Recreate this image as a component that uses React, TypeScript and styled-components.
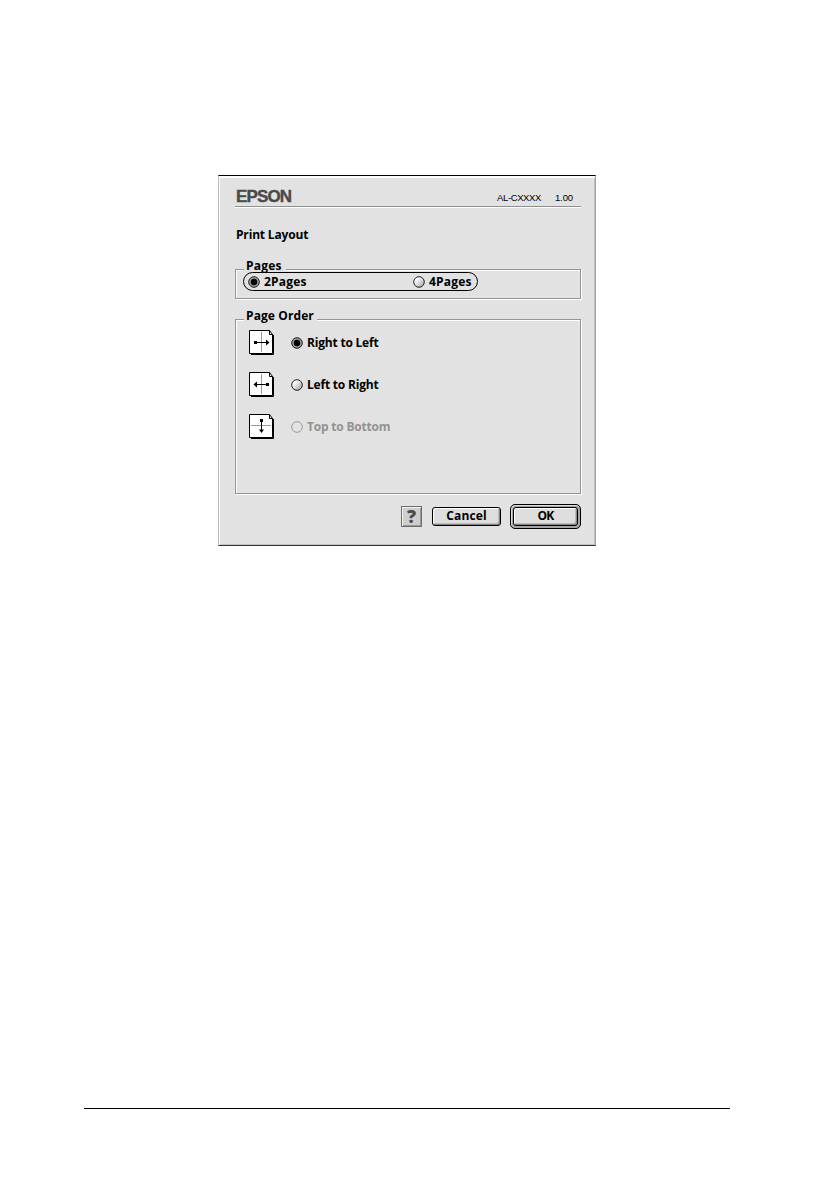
import React from 'react';
import styled, { createGlobalStyle, css } from 'styled-components';

const GlobalStyle = createGlobalStyle`
  * { box-sizing: border-box; }
  body { margin: 0; background: #fff; }
`;

const Page = styled.main`
  width: 840px;
  height: 1190px;
  padding: 175px 110px 81px 84px;
  display: flex;
  flex-direction: column;
  justify-content: space-between;
  background: #fff;
  color: #000;
  font: 700 12px/16px 'Open Sans', 'Noto Sans', sans-serif;
`;

const Dialog = styled.section`
  width: 378px;
  height: 371px;
  margin-left: 134px;
  padding: 12px 13px 0 15px;
  border: 1px solid #a0a0a0;
  border-left-color: #bdbdbd;
  border-top-color: #000;
  border-bottom-color: #333;
  background: #e2e2e2;
  box-shadow: inset 1px 2px 0 #fbfbfb, inset -1px -1px 0 #c2c2c2;
`;

const Header = styled.header`
  width: 346px;
  height: 20px;
  margin-left: 1px;
  display: flex;
  justify-content: space-between;
  border-bottom: 1px solid #fff;
  box-shadow: inset 0 -1px 0 #8e8e8e;
`;

const Brand = styled.div`
  padding-left: 1px;
  font: 700 17px/18px 'Liberation Sans', Arial, sans-serif;
  letter-spacing: -0.85px;
  color: #4a4a4a;
  -webkit-text-stroke: 0.4px #4a4a4a;
`;

const Version = styled.div`
  display: flex;
  gap: 14px;
  padding: 3px 8px 0 0;
  font: 400 9.5px/14px 'Liberation Sans', Arial, sans-serif;
`;

const Label = styled.span<{ $spacing?: number; $muted?: boolean }>`
  letter-spacing: ${(p) => p.$spacing ?? 0}px;
  white-space: nowrap;
  color: ${(p) => (p.$muted ? '#929292' : '#000')};
`;

const Title = styled.h1`
  margin: 19px 0 0 2px;
  height: 17px;
  font: inherit;
`;

const Group = styled.fieldset<{ $height: number; $top: number }>`
  width: 346px;
  height: ${(p) => p.$height}px;
  margin: ${(p) => p.$top}px 0 0 1px;
  padding: 0;
  border: 1px solid #949494;
  box-shadow: 1px 1px 0 #fff, inset 1px 1px 0 #fff;
  min-width: 0;
`;

const Legend = styled.div<{ $width: number }>`
  width: ${(p) => p.$width}px;
  height: 16px;
  margin: -12px 0 0 8px;
  padding-left: 2px;
  background: #e2e2e2;
`;

const Capsule = styled.div`
  width: 235px;
  height: 19px;
  margin: -2px 0 0 7px;
  padding: 0 4px;
  display: flex;
  align-items: center;
  border: 1px solid #000;
  border-radius: 10px;
`;

const Option = styled.label<{ $width?: number }>`
  display: flex;
  align-items: center;
  gap: 4px;
  width: ${(p) => (p.$width ? `${p.$width}px` : 'auto')};
`;

const Orders = styled.div`
  padding: 6px 0 0 13px;
`;

const OrderRow = styled.div`
  display: flex;
  align-items: center;
  gap: 17px;
  height: 26px;
  margin-bottom: 16px;
`;

const Footer = styled.footer`
  height: 26px;
  margin-top: 9px;
  padding-right: 1px;
  display: flex;
  align-items: center;
  justify-content: flex-end;
`;

const buttonFace = css`
  height: 19px;
  display: flex;
  align-items: center;
  justify-content: center;
  padding: 0;
  border: 1px solid #000;
  border-radius: 3px;
  background: #dedede;
  box-shadow: inset 1px 1px 0 #fff, inset -1px -1px 0 #888, inset -2px -2px 0 #bbb;
  font: inherit;
  color: #000;
`;

const Button = styled.button<{ $width: number }>`
  ${buttonFace}
  width: ${(p) => p.$width}px;
`;

const DefaultRing = styled.div`
  width: 71px;
  height: 25px;
  margin-left: 9px;
  padding: 2px;
  border: 1px solid #000;
  border-radius: 5px;
  background: #a5a5a5;
  box-shadow: inset 1px 1px 0 #ddd;
`;

const HelpButton = styled.button`
  width: 21px;
  height: 21px;
  margin-right: 10px;
  padding: 0;
  border: 1px solid #6c6c6c;
  background: #cecece;
  box-shadow: inset 1px 1px 0 #f4f4f4, inset -1px -1px 0 #999;
  font: 800 18px/18px 'Open Sans', sans-serif;
  color: #4b4b4b;
`;

const Rule = styled.div`
  width: 646px;
  height: 1px;
  background: #000;
`;

type RadioState = 'on' | 'off' | 'disabled';

function Radio({ state }: { state: RadioState }) {
  return (
    <svg width="12" height="12" viewBox="0 0 12 12">
      <defs>
        <linearGradient id="knob" x1="0" y1="0" x2="1" y2="1">
          <stop offset=".25" stopColor="#fff" />
          <stop offset="1" stopColor="#999" />
        </linearGradient>
      </defs>
      <circle
        cx="6"
        cy="6"
        r="5.3"
        fill={state === 'on' ? '#999' : state === 'off' ? 'url(#knob)' : '#e4e4e4'}
        stroke={state === 'disabled' ? '#929292' : '#222'}
        strokeWidth={state === 'disabled' ? 0.9 : 1}
      />
      {state === 'on' && <circle cx="6" cy="6" r="3.2" fill="#000" />}
    </svg>
  );
}

type Direction = 'right' | 'left' | 'down';

function SheetIcon({ direction }: { direction: Direction }) {
  return (
    <svg width="25" height="26" viewBox="0 0 25 26">
      <path d="M2 24.5H24.5V5" fill="none" stroke="#000" />
      <path d="M.5 .5H20.5L23.5 4.5V23.5H.5Z" fill="#fff" stroke="#000" />
      <path d="M20.5 .5V4.5H24" fill="none" stroke="#000" />
      {direction === 'down' ? (
        <>
          <path d="M2 11.5H22" stroke="#999" />
          <path d="M12.5 6V18" stroke="#000" />
          <path d="M11 5h3v3h-3zM10 15.5h5l-2.5 3.5z" />
        </>
      ) : (
        <>
          <path d="M12.5 2V22" stroke="#999" />
          <g transform={direction === 'left' ? 'translate(25 0) scale(-1 1)' : undefined}>
            <path d="M6 12.5H18" stroke="#000" />
            <path d="M5 11h3v3H5zM17 9.5l3.5 3-3.5 3z" />
          </g>
        </>
      )}
    </svg>
  );
}

const orders: { label: string; direction: Direction; state: RadioState }[] = [
  { label: 'Right to Left', direction: 'right', state: 'on' },
  { label: 'Left to Right', direction: 'left', state: 'off' },
  { label: 'Top to Bottom', direction: 'down', state: 'disabled' },
];

export default function App() {
  return (
    <>
      <GlobalStyle />
      <Page>
        <Dialog>
          <Header>
            <Brand>EPSON</Brand>
            <Version>
              <Label $spacing={-0.4}>AL-CXXXX</Label>
              <Label $spacing={-0.1}>1.00</Label>
            </Version>
          </Header>
          <Title>
            <Label $spacing={-0.17}>Print Layout</Label>
          </Title>
          <Group $height={30} $top={25}>
            <Legend $width={42}>
              <Label $spacing={0.2}>Pages</Label>
            </Legend>
            <Capsule>
              <Option $width={165}>
                <Radio state="on" />
                <Label $spacing={0.2}>2Pages</Label>
              </Option>
              <Option>
                <Radio state="off" />
                <Label $spacing={0.2}>4Pages</Label>
              </Option>
            </Capsule>
          </Group>
          <Group $height={175} $top={20}>
            <Legend $width={73}>
              <Label $spacing={0.1}>Page Order</Label>
            </Legend>
            <Orders>
              {orders.map((order) => (
                <OrderRow key={order.label}>
                  <SheetIcon direction={order.direction} />
                  <Option>
                    <Radio state={order.state} />
                    <Label $spacing={-0.2} $muted={order.state === 'disabled'}>
                      {order.label}
                    </Label>
                  </Option>
                </OrderRow>
              ))}
            </Orders>
          </Group>
          <Footer>
            <HelpButton>?</HelpButton>
            <Button $width={69}>
              <Label $spacing={0.1}>Cancel</Label>
            </Button>
            <DefaultRing>
              <Button $width={65}>
                <Label $spacing={-0.8}>OK</Label>
              </Button>
            </DefaultRing>
          </Footer>
        </Dialog>
        <Rule />
      </Page>
    </>
  );
}
